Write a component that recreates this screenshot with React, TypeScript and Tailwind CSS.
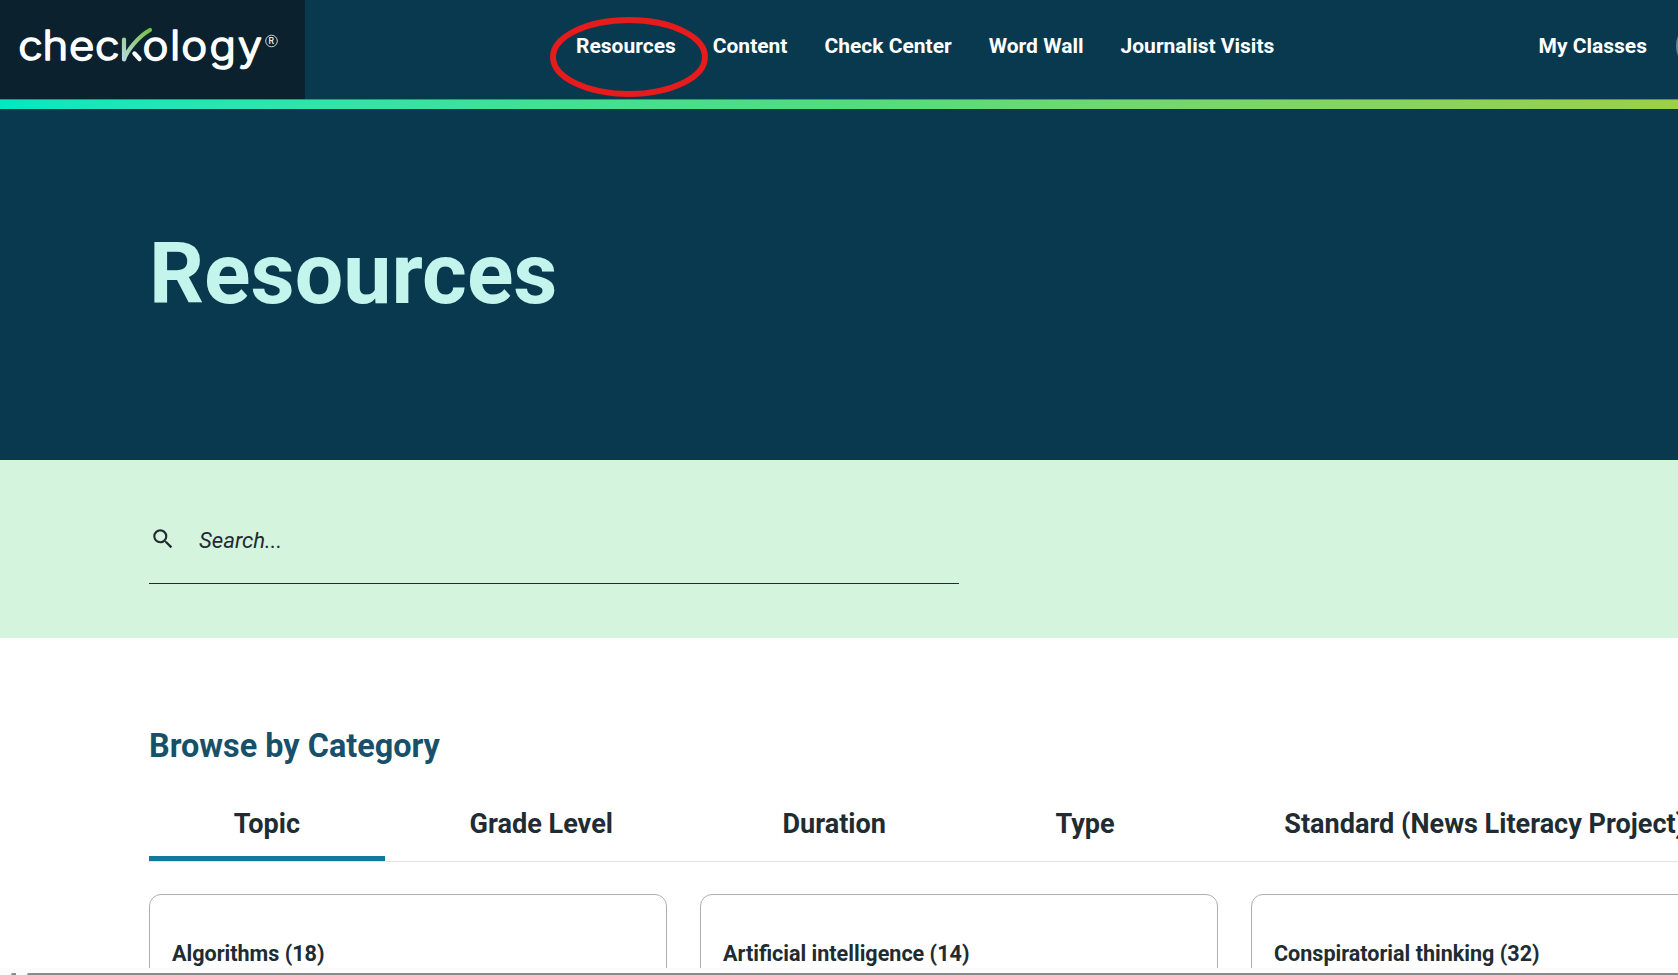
import { MdSearch } from 'react-icons/md';

const navItems = ['Resources', 'Content', 'Check Center', 'Word Wall', 'Journalist Visits'];

const tabs = ['Topic', 'Grade Level', 'Duration', 'Type', 'Standard (News Literacy Project)'];

const topics = [
  { name: 'Algorithms', count: 18 },
  { name: 'Artificial intelligence', count: 14 },
  { name: 'Conspiratorial thinking', count: 32 },
];

function Logo() {
  return (
    <svg width="305" height="99" viewBox="0 0 305 99" className="block font-['Inter',sans-serif]">
      <defs>
        <linearGradient id="check" gradientUnits="userSpaceOnUse" x1="122" y1="62" x2="150" y2="29">
          <stop offset="0" stopColor="#b9dbe6" />
          <stop offset="0.45" stopColor="#9fcfa0" />
          <stop offset="1" stopColor="#72bf3b" />
        </linearGradient>
      </defs>
      <g
        transform="scale(1.08 1)"
        fill="#fff"
        stroke="#fff"
        strokeWidth="1.6"
        strokeLinejoin="round"
        fontSize="40.5"
        fontWeight="300"
      >
        <text x="16.8 39.3 64 88" y="60">chec</text>
        <text x="132 157.5 167.9 194 220.1" y="60">ology</text>
      </g>
      {/* k, drawn as a check mark */}
      <path d="M134.5 53.5L139.5 59" fill="none" stroke="#fff" strokeWidth="4.4" strokeLinecap="round" />
      <path
        d="M124 39.5V59.5C127 51 138 36.5 150 30"
        fill="none"
        stroke="url(#check)"
        strokeWidth="4.2"
        strokeLinecap="round"
        strokeLinejoin="round"
      />
      <circle cx="271.5" cy="41" r="5.8" fill="none" stroke="#e4e8ea" strokeWidth="0.9" />
      <text x="268.6" y="44.2" fill="#fff" fontSize="8.5" fontWeight="500">R</text>
    </svg>
  );
}

function Header() {
  return (
    <header className="relative flex h-[99px] bg-[#09394e]">
      <div className="w-[305px] shrink-0 bg-[#0b212d]">
        <Logo />
      </div>
      <nav className="ml-[271px] flex h-[94px] items-center gap-[37px] text-[21px] font-bold text-white">
        {navItems.map((item) => (
          <a key={item} href="#" className="whitespace-nowrap">
            {item}
          </a>
        ))}
      </nav>
      <a href="#" className="mr-[31px] ml-auto flex h-[94px] items-center text-[21px] font-bold text-white">
        My Classes
      </a>
      {/* Avatar, mostly past the right edge */}
      <span className="absolute top-5 left-[1676px] size-[52px] rounded-full border-2 border-[#6d8490]" />
      <svg className="absolute top-[14px] left-[547px]" width="164" height="86" viewBox="0 0 164 86">
        <ellipse cx="82" cy="43" rx="76" ry="37" fill="none" stroke="#e61b1b" strokeWidth="6" />
      </svg>
    </header>
  );
}

export default function App() {
  return (
    <div className="flex h-[975px] w-full flex-col overflow-hidden bg-white font-['Roboto',sans-serif] text-[#212b32]">
      <Header />
      <div className="h-[10px] shrink-0 border-t border-black/30 bg-linear-to-r from-[#00e8c1] via-[#50dc7e] to-[#9bd046] bg-origin-border" />

      <section className="h-[351px] shrink-0 bg-[#09394e] pt-[115px] pl-[149px]">
        <h1 className="text-[86px] leading-[100px] font-bold text-[#c3f5ec]">Resources</h1>
      </section>

      <section className="h-[178px] shrink-0 bg-[#d5f4dd] pt-[53px] pl-[149px]">
        <div className="flex h-[71px] w-[810px] border-b border-[#212b32] pl-px">
          <MdSearch className="mt-[13px] size-[26px] shrink-0" />
          <input
            type="text"
            placeholder="Search..."
            className="ml-[23px] h-[53px] w-full bg-transparent text-[22.2px] italic outline-none placeholder:text-[#212b32]"
          />
        </div>
      </section>

      <main className="h-[330px] shrink-0 overflow-hidden pl-[149px]">
        <h2 className="mt-[88px] text-[32.4px] leading-10 font-bold text-[#17506a]">Browse by Category</h2>
        <div className="mt-[21px] flex h-[75px] w-[2000px] border-b border-[#e1e3e4]">
          {tabs.map((tab, i) => (
            <button
              key={tab}
              className={`h-[74px] shrink-0 border-b-5 px-[84.8px] pt-[5px] text-[27.05px] leading-[64px] font-bold whitespace-nowrap ${
                i === 0 ? 'border-[#117a97]' : 'border-transparent'
              }`}
            >
              {tab}
            </button>
          ))}
        </div>
        <div className="mt-8 flex w-[1700px] gap-[33px]">
          {topics.map((topic) => (
            <a
              key={topic.name}
              href="#"
              className="h-[120px] w-[518px] shrink-0 rounded-xl border border-[#adb0b2] px-[22px] pt-[43px] text-[21.55px] leading-8 font-bold"
            >
              {topic.name} ({topic.count})
            </a>
          ))}
        </div>
      </main>

      {/* Horizontal scrollbar */}
      <div className="flex h-[7px] shrink-0 items-end bg-[#fbfbfb]">
        <span className="ml-[11px] h-[2px] w-[5px] rounded-tl-full bg-[#8a8a8a]" />
        <span className="ml-[11px] h-[2px] flex-1 rounded-tl-sm bg-[#8a8a8a]" />
      </div>
    </div>
  );
}
